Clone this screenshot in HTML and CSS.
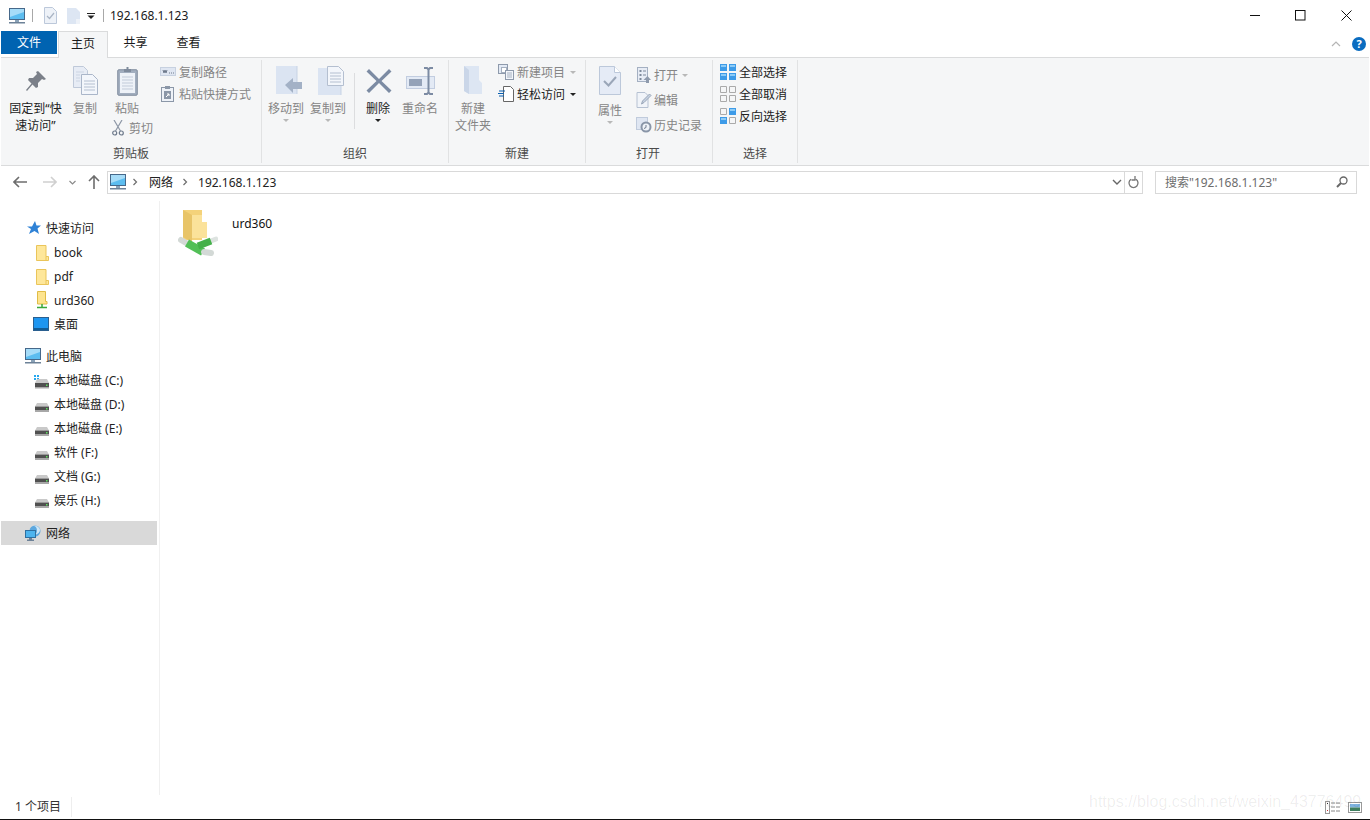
FILE: index.html
```html
<!DOCTYPE html>
<html lang="zh-CN">
<head>
  <meta charset="UTF-8">
  <title>192.168.1.123</title>
  <link rel="stylesheet" href="styles.css">
</head>
<body>
  <svg class="defs" width="0" height="0">
    <symbol id="pc" viewBox="0 0 16 16">
      <rect x="0.5" y="0.5" width="15" height="11" fill="#5cbdf0" stroke="#46688a"/>
      <path d="M1 1h14v3L1 9z" fill="#a6dcf8"/>
      <rect x="6" y="12" width="4" height="2" fill="#8aa2b8"/>
      <rect x="0" y="14" width="16" height="1.5" fill="#6d8298"/>
    </symbol>
    <symbol id="drive" viewBox="0 0 14 9">
      <path d="M2 0h10l2 3.500H0z" fill="#c9c9c9"/>
      <rect x="0" y="3.500" width="14" height="4" fill="#505050"/>
      <rect x="0" y="7.500" width="14" height="1.500" fill="#a8a8a8"/>
      <rect x="11" y="5" width="1.500" height="1.500" fill="#5fe05f"/>
    </symbol>
    <symbol id="folder" viewBox="0 0 13 16" preserveAspectRatio="none">
      <path d="M.5.5h9.500v11h2.500v4H.5z" fill="#fee79a" stroke="#eac55a"/>
      <path d="M10 11.500v4" stroke="#eac55a"/>
    </symbol>
    <symbol id="chev" viewBox="0 0 8 8">
      <path d="M2.500 1l3 3-3 3" fill="none" stroke="#6d6d6d" stroke-width="1.200"/>
    </symbol>
  </svg>

  <div class="window">
    <header class="title-bar">
      <svg class="qa-pc" width="16" height="16"><use href="#pc"/></svg>
      <span class="qa-sep"></span>
      <svg class="qa-check" width="13" height="17" viewBox="0 0 13 17">
        <path d="M.5.5h8l4 4v12H.5z" fill="#eef2f8" stroke="#bcc8da"/>
        <path d="M3 9l2.500 2.500L10 6" fill="none" stroke="#a9b4c4" stroke-width="1.200"/>
      </svg>
      <svg class="qa-blank" width="13" height="16" viewBox="0 0 13 16">
        <path d="M0 0h9l4 4v12H0z" fill="#dde6f3"/>
        <path d="M9 11h4v5H9z" fill="#eef2f8"/>
      </svg>
      <svg class="qa-caret" width="8" height="6" viewBox="0 0 8 6">
        <rect x="0" y="0" width="8" height="1" fill="#222"/>
        <path d="M.5 2.500h7L4 6z" fill="#222"/>
      </svg>
      <span class="qa-sep qa-sep-end"></span>
      <span class="title-text">192.168.1.123</span>
      <div class="win-controls">
        <div class="win-btn"><svg width="11" height="11"><path d="M0 5.500h10" stroke="#111"/></svg></div>
        <div class="win-btn"><svg width="11" height="11"><rect x=".5" y=".5" width="9.500" height="9.500" fill="none" stroke="#111"/></svg></div>
        <div class="win-btn"><svg width="11" height="11"><path d="M.5.5l10 10M10.500.5l-10 10" stroke="#111"/></svg></div>
      </div>
    </header>

    <nav class="tabs">
      <div class="tab tab-file">文件</div>
      <div class="tab tab-active">主页</div>
      <div class="tab">共享</div>
      <div class="tab">查看</div>
      <div class="tabs-right">
        <svg width="10" height="6" viewBox="0 0 10 6"><path d="M1 5l4-4 4 4" fill="none" stroke="#b5b5b5" stroke-width="1.200"/></svg>
        <span class="help">?</span>
      </div>
    </nav>

    <section class="ribbon">
      <div class="group group-clip">
        <div class="group-body">
          <div class="big-btn btn-pin">
            <div class="big-icon">
              <svg width="22" height="22" viewBox="0 0 22 22">
                <path d="M13 1l8 8-2 1-2-1-4 4 0 4-2 1-3.500-3.500L2 21l-1-1 5.500-6.500L3 10l1-2h4l4-4-1-2z" fill="#7b8089"/>
              </svg>
            </div>
            <span class="dark">固定到“快<br>速访问”</span>
          </div>
          <div class="big-btn btn-copy">
            <div class="big-icon">
              <svg width="25" height="29" viewBox="0 0 25 29">
                <path d="M.5.5h10l4 4v17H.5z" fill="#e7ecf5" stroke="#bfc9d9"/>
                <path d="M8.500 8.500h11l5 5v15h-16z" fill="#f3f6fb" stroke="#aab6c9"/>
                <path d="M11 15h11M11 18h11M11 21h11M11 24h11" stroke="#b4bfd0"/>
                <path d="M3 6h8M3 9h4M3 12h4M3 15h4" stroke="#ccd5e3"/>
              </svg>
            </div>
            <span>复制</span>
          </div>
          <div class="paste-col">
            <div class="big-btn">
              <div class="big-icon">
                <svg width="21" height="30" viewBox="0 0 21 30">
                  <rect x=".75" y="3.750" width="19.500" height="25.500" rx="1" fill="#a2aebf" stroke="#7f8b9c"/>
                  <rect x="3" y="7" width="15" height="20" fill="#eef2f8"/>
                  <path d="M5 11h11M5 14h11M5 17h11M5 20h11M5 23h11" stroke="#c2cbd9"/>
                  <path d="M7 6V3h2.500V1h2v2H14v3z" fill="#7f8b9c"/>
                </svg>
              </div>
              <span>粘贴</span>
            </div>
            <div class="small-btn btn-cut">
              <svg width="12" height="16" viewBox="0 0 12 16">
                <path d="M2 0l6.500 11M10 0L3.500 11" stroke="#8d97a6" stroke-width="1.200"/>
                <circle cx="2.700" cy="13" r="2" fill="none" stroke="#6e7a8c" stroke-width="1.200"/>
                <circle cx="9.300" cy="13" r="2" fill="none" stroke="#6e7a8c" stroke-width="1.200"/>
              </svg>
              <span>剪切</span>
            </div>
          </div>
          <div class="small-col col-clip">
            <div class="small-btn">
              <svg width="16" height="10" viewBox="0 0 16 10">
                <rect x=".5" y=".5" width="15" height="8" fill="#dfe6f2" stroke="#c7d1e0"/>
                <path d="M3 3l1 3 1-3 1 3 1-3M9 6h1M11 6h1M13 6h1" fill="none" stroke="#6e7a8c"/>
              </svg>
              <span>复制路径</span>
            </div>
            <div class="small-btn">
              <svg width="14" height="16" viewBox="0 0 14 16">
                <rect x=".5" y="1.500" width="12" height="14" fill="#eef2f8" stroke="#8b97a8"/>
                <rect x="4" y="0" width="5" height="3" fill="#8b97a8"/>
                <rect x="3" y="5" width="7" height="8" fill="#8b97a8"/>
                <path d="M5 11l3-3M6 8h2v2" fill="none" stroke="#fff"/>
              </svg>
              <span>粘贴快捷方式</span>
            </div>
          </div>
        </div>
        <div class="group-label">剪贴板</div>
      </div>

      <div class="group group-org">
        <div class="group-body">
          <div class="big-btn btn-shift">
            <div class="big-icon">
              <svg width="26" height="29" viewBox="0 0 26 29">
                <path d="M0 0h21v28H0z" fill="#dbe4f2"/>
                <path d="M21 0v28" stroke="#c7d3e5"/>
                <path d="M9 19l8-7v4h9v7h-9v4z" fill="#a3b1c6"/>
              </svg>
            </div>
            <span>移动到</span>
            <i class="caret caret-off"></i>
          </div>
          <div class="big-btn btn-shift">
            <div class="big-icon">
              <svg width="26" height="30" viewBox="0 0 26 30">
                <path d="M0 2h23v27H0z" fill="#dbe4f2"/>
                <path d="M23 14v15" stroke="#c7d3e5"/>
                <path d="M9.500.5h11l5 5v14h-16z" fill="#f3f6fb" stroke="#b4bfd0"/>
                <path d="M12 7h11M12 10h11M12 13h11M12 16h11" stroke="#b4bfd0"/>
              </svg>
            </div>
            <span>复制到</span>
            <i class="caret caret-off"></i>
          </div>
          <span class="btn-sep"></span>
          <div class="big-btn btn-delete">
            <div class="big-icon">
              <svg width="26" height="26" viewBox="0 0 26 26">
                <path d="M3 1l10 10L23 1l2.500 2.500-10 9.500 10 9.500L23 25 13 15 3 25 .5 22.500l10-9.500-10-9.500z" fill="#7c8ba3"/>
              </svg>
            </div>
            <span class="dark">删除</span>
            <i class="caret"></i>
          </div>
          <div class="big-btn btn-rename">
            <div class="big-icon">
              <svg width="29" height="28" viewBox="0 0 29 28">
                <rect x=".5" y="9.500" width="28" height="12" fill="#e3eaf5" stroke="#c2cde0"/>
                <rect x="3" y="12" width="13" height="7" fill="#94a2b8"/>
                <path d="M18 1h3l1.500 1.500L24 1h3M22.500 2v24M18 27h3l1.500-1.500L24 27h3" fill="none" stroke="#7c8ba3" stroke-width="2"/>
              </svg>
            </div>
            <span>重命名</span>
          </div>
        </div>
        <div class="group-label">组织</div>
      </div>

      <div class="group group-new">
        <div class="group-body">
          <div class="big-btn">
            <div class="big-icon">
              <svg width="18" height="28" viewBox="0 0 18 28">
                <path d="M0 0h15v14l3 3v11H5l-5-3z" fill="#dde6f3"/>
                <path d="M0 0l5 4v24l-5-3z" fill="#cad6e8"/>
              </svg>
            </div>
            <span>新建<br>文件夹</span>
          </div>
          <div class="small-col col-new">
            <div class="small-btn">
              <svg width="16" height="16" viewBox="0 0 16 16">
                <rect x=".5" y=".5" width="9" height="9" fill="#e3eaf5" stroke="#8e9aac"/>
                <rect x="3.500" y="3.500" width="5" height="5" fill="#fff" stroke="#a5b0c0"/>
                <rect x="7.500" y="6.500" width="8" height="9" fill="#f3f6fb" stroke="#8e9aac"/>
                <path d="M9 9h5M9 11h5M9 13h5" stroke="#a5b0c0"/>
              </svg>
              <span>新建项目</span>
              <i class="caret caret-off caret-inline"></i>
            </div>
            <div class="small-btn">
              <svg width="16" height="16" viewBox="0 0 16 16">
                <path d="M5.500.5h7l3 3v12h-10z" fill="#fff" stroke="#666"/>
                <path d="M1 5h6M0 7.500h6M1 10h5" stroke="#0a5fb0" stroke-width="1.200"/>
              </svg>
              <span class="dark">轻松访问</span>
              <i class="caret caret-inline"></i>
            </div>
          </div>
        </div>
        <div class="group-label">新建</div>
      </div>

      <div class="group group-open">
        <div class="group-body">
          <div class="big-btn btn-props">
            <div class="big-icon">
              <svg width="22" height="29" viewBox="0 0 22 29">
                <path d="M.5.5h15l6 6v22H.5z" fill="#e5ebf6" stroke="#bcc8da"/>
                <path d="M15.500.5v6h6" fill="#fff" stroke="#bcc8da"/>
                <path d="M5 15l4.500 4.500L17 11" fill="none" stroke="#9aa6b8" stroke-width="2"/>
              </svg>
            </div>
            <span>属性</span>
            <i class="caret caret-off"></i>
          </div>
          <div class="small-col col-open">
            <div class="small-btn">
              <svg width="14" height="16" viewBox="0 0 14 16">
                <rect x=".5" y=".5" width="10" height="14" fill="#e7ecf5" stroke="#a4b0c2"/>
                <path d="M2.500 3h2v2h-2zM2.500 7h2v2h-2zM2.500 11h2v2h-2z" fill="#7e8a9c"/>
                <path d="M6 4h3M6 8h3" stroke="#7e8a9c"/>
                <path d="M6.500 13l4-4 3.500 4h-2v3h-3v-3z" fill="#8e9aac"/>
              </svg>
              <span>打开</span>
              <i class="caret caret-off caret-inline"></i>
            </div>
            <div class="small-btn">
              <svg width="15" height="16" viewBox="0 0 15 16">
                <path d="M.5.5h8l3 3v12H.5z" fill="#f1f4f9" stroke="#b6c1d2"/>
                <path d="M5 12l1-3 7-7 1.500 1.500-7 7z" fill="#c7d2e2" stroke="#9aa6b8"/>
              </svg>
              <span>编辑</span>
            </div>
            <div class="small-btn">
              <svg width="16" height="16" viewBox="0 0 16 16">
                <rect x=".5" y=".5" width="11" height="12" fill="#dfe6f2" stroke="#c0cbdc"/>
                <circle cx="10" cy="10" r="5.500" fill="#8995a7"/>
                <circle cx="10" cy="10" r="3.500" fill="#eef2f8"/>
                <path d="M10 8v2.500l-2 1" fill="none" stroke="#6e7a8c"/>
              </svg>
              <span>历史记录</span>
            </div>
          </div>
        </div>
        <div class="group-label">打开</div>
      </div>

      <div class="group group-select">
        <div class="group-body">
          <div class="small-col col-select">
            <div class="small-btn">
              <svg width="16" height="16" viewBox="0 0 16 16">
                <path d="M0 0h7v7H0zM9 0h7v7H9zM0 9h7v7H0zM9 9h7v7H9z" fill="#3d9be8"/>
                <path d="M1 1h5v2H1zM10 1h5v2h-5zM1 10h5v2H1zM10 10h5v2h-5z" fill="#8ccbf7"/>
              </svg>
              <span class="dark">全部选择</span>
            </div>
            <div class="small-btn">
              <svg width="16" height="16" viewBox="0 0 16 16">
                <path d="M.5.5h6v6h-6zM9.500.5h6v6h-6zM.5 9.500h6v6h-6zM9.500 9.500h6v6h-6z" fill="none" stroke="#aaa"/>
              </svg>
              <span class="dark">全部取消</span>
            </div>
            <div class="small-btn">
              <svg width="16" height="16" viewBox="0 0 16 16">
                <path d="M.5.5h6v6h-6zM9.500 9.500h6v6h-6z" fill="none" stroke="#aaa"/>
                <path d="M9 0h7v7H9zM0 9h7v7H0z" fill="#3d9be8"/>
                <path d="M10 1h5v2h-5zM1 10h5v2H1z" fill="#8ccbf7"/>
              </svg>
              <span class="dark">反向选择</span>
            </div>
          </div>
        </div>
        <div class="group-label">选择</div>
      </div>
    </section>

    <section class="address-row">
      <div class="nav-btns">
        <svg class="nav-back" width="14" height="12" viewBox="0 0 14 12"><path d="M6 1L1 6l5 5M1 6h13" fill="none" stroke="#6d6d6d" stroke-width="1.600"/></svg>
        <svg class="nav-fwd" width="14" height="12" viewBox="0 0 14 12"><path d="M8 1l5 5-5 5M13 6H0" fill="none" stroke="#d0d0d0" stroke-width="1.600"/></svg>
        <svg class="nav-drop" width="7" height="5" viewBox="0 0 7 5"><path d="M.5 1l3 3 3-3" fill="none" stroke="#8a8a8a" stroke-width="1.200"/></svg>
        <svg class="nav-up" width="12" height="14" viewBox="0 0 12 14"><path d="M1 6l5-5 5 5M6 1v13" fill="none" stroke="#6d6d6d" stroke-width="1.600"/></svg>
      </div>
      <div class="address-box">
        <svg class="addr-pc" width="16" height="16"><use href="#pc"/></svg>
        <svg class="addr-chev" width="8" height="8"><use href="#chev"/></svg>
        <span>网络</span>
        <svg class="addr-chev addr-chev-2" width="8" height="8"><use href="#chev"/></svg>
        <span>192.168.1.123</span>
        <div class="addr-tools">
          <svg width="10" height="6" viewBox="0 0 10 6"><path d="M1 1l4 4 4-4" fill="none" stroke="#666" stroke-width="1.400"/></svg>
          <span class="addr-refresh">
            <svg width="11" height="13" viewBox="0 0 11 13"><path d="M3 3.300A4.500 4.500 0 1 0 8 3.300M7 0v4h-3.500" fill="none" stroke="#777" stroke-width="1.300"/></svg>
          </span>
        </div>
      </div>
      <div class="search-box">
        <span>搜索"192.168.1.123"</span>
        <svg width="12" height="12" viewBox="0 0 12 12"><circle cx="7.500" cy="4.500" r="3.500" fill="none" stroke="#666" stroke-width="1.300"/><path d="M5 7l-4 4" stroke="#666" stroke-width="2"/></svg>
      </div>
    </section>

    <main class="main">
      <aside class="sidebar">
        <div class="nav-item nav-top">
          <svg width="14" height="14" viewBox="0 0 14 14"><path d="M8 0l1.500 4.500H14l-3.500 3L12 13 7.500 10 2 13l2-5L0 5.500h5z" fill="#2f82d6"/></svg>
          <span>快速访问</span>
        </div>
        <div class="nav-item nav-sub"><svg class="ico-folder" width="13" height="16"><use href="#folder"/></svg><span>book</span></div>
        <div class="nav-item nav-sub"><svg class="ico-folder" width="13" height="16"><use href="#folder"/></svg><span>pdf</span></div>
        <div class="nav-item nav-sub">
          <svg width="14" height="18" viewBox="0 0 14 18">
            <path d="M2.500.5h8v10h1.500v2.500H2.500z" fill="#fde48f" stroke="#e0bc46"/>
            <path d="M7 13v3M2 16.500h10" stroke="#3aa83a" stroke-width="1.500"/>
          </svg>
          <span>urd360</span>
        </div>
        <div class="nav-item nav-sub">
          <svg class="ico-wide" width="16" height="14" viewBox="0 0 16 14">
            <rect x=".5" y=".5" width="15" height="13" fill="#1e96f0" stroke="#2a5f8f"/>
            <path d="M1 11h14v2H1z" fill="#135c94"/>
          </svg>
          <span>桌面</span>
        </div>

        <div class="nav-item nav-top nav-group">
          <svg class="ico-pc" width="16" height="16"><use href="#pc"/></svg>
          <span>此电脑</span>
        </div>
        <div class="nav-item nav-sub">
          <svg class="ico-drive-c" width="16" height="14" viewBox="0 0 16 14">
            <path d="M0 0h2v2H0zM3 0h2v2H3zM0 3h2v2H0zM3 3h2v2H3z" fill="#25a8f0"/>
            <path d="M3 4h10l2 4H1z" fill="#c9c9c9"/>
            <rect x="1" y="8" width="14" height="4" fill="#505050"/>
            <rect x="1" y="12" width="14" height="1.500" fill="#a8a8a8"/>
            <rect x="12" y="9.500" width="1.500" height="1.500" fill="#5fe05f"/>
          </svg>
          <span>本地磁盘 (C:)</span>
        </div>
        <div class="nav-item nav-sub"><svg class="ico-drive" width="14" height="9"><use href="#drive"/></svg><span>本地磁盘 (D:)</span></div>
        <div class="nav-item nav-sub"><svg class="ico-drive" width="14" height="9"><use href="#drive"/></svg><span>本地磁盘 (E:)</span></div>
        <div class="nav-item nav-sub"><svg class="ico-drive" width="14" height="9"><use href="#drive"/></svg><span>软件 (F:)</span></div>
        <div class="nav-item nav-sub"><svg class="ico-drive" width="14" height="9"><use href="#drive"/></svg><span>文档 (G:)</span></div>
        <div class="nav-item nav-sub"><svg class="ico-drive" width="14" height="9"><use href="#drive"/></svg><span>娱乐 (H:)</span></div>

        <div class="nav-item nav-top nav-selected">
          <svg class="ico-pc" width="16" height="16" viewBox="0 0 16 16">
            <circle cx="10" cy="6" r="5.500" fill="#5da8df"/>
            <path d="M8 1c3 0 4 2 4 5 0 1-1 3-2 4 3-1 5-3 5-5S12 0 8 1z" fill="#cfe6f6"/>
            <rect x=".5" y="5.500" width="10" height="7" fill="#4db4ee" stroke="#2f6f9f"/>
            <path d="M4 13h3v1.500h2V16H2v-1.500h2z" fill="#6d8298"/>
          </svg>
          <span>网络</span>
        </div>
      </aside>

      <div class="files">
        <div class="file-item">
          <svg width="40" height="48" viewBox="0 0 40 48">
            <path d="M5 2h19v30H5z" fill="#f4d27a"/>
            <path d="M5 2l9 5v27l-9-5z" fill="#e8c468"/>
            <path d="M14 7h10v7h5v16H14z" fill="#fbe29a"/>
            <path d="M3 32l6 3.500" stroke="#d3d9d6" stroke-width="6" stroke-linecap="round"/>
            <path d="M33 33l5-2" stroke="#dde3e0" stroke-width="5" stroke-linecap="round"/>
            <path d="M9 35l16 9" stroke="#52bf57" stroke-width="8"/>
            <path d="M20 38l13-5" stroke="#45b04a" stroke-width="7"/>
            <path d="M26 44l7 1" stroke="#d3d9d6" stroke-width="6" stroke-linecap="round"/>
          </svg>
          <span class="file-name">urd360</span>
        </div>
      </div>
    </main>

    <footer class="status-bar">
      <span class="status-count">1 个项目</span>
      <div class="view-btns">
        <svg width="16" height="13" viewBox="0 0 16 13">
          <rect x=".5" y=".5" width="4" height="12" fill="#fff" stroke="#999"/>
          <path d="M2 2.500h1" stroke="#333"/><path d="M2 9.500h1" stroke="#c33"/>
          <path d="M6 2h4M11 2h4M6 6h4M11 6h4M6 10h4M11 10h4" stroke="#888"/>
        </svg>
        <svg width="14" height="11" viewBox="0 0 14 11">
          <rect x=".5" y=".5" width="13" height="10" fill="#fff" stroke="#999"/>
          <rect x="2" y="2" width="10" height="3.500" fill="#7fb4e0"/>
          <rect x="2" y="5.500" width="10" height="3.500" fill="#3f7f5f"/>
        </svg>
      </div>
    </footer>

    <div class="watermark">https://blog.csdn.net/weixin_43776499</div>
  </div>
</body>
</html>
```

FILE: styles.css
```css
/* 基础 */
* {
  box-sizing: border-box;
}
html, body {
  margin: 0;
  height: 100%;
  background: #fff;
}
body {
  font-family: "Noto Sans", "Noto Sans CJK SC", sans-serif;
  font-size: 12px;
  color: #1a1a1a;
  overflow: hidden;
}
.defs {
  position: absolute;
}
svg {
  display: block;
  flex: none;
}
.window {
  position: relative;
  width: 1370px;
  height: 820px;
  display: flex;
  flex-direction: column;
  border-bottom: 1px solid #111;
}

/* 标题栏 */
.title-bar {
  height: 31px;
  display: flex;
  align-items: center;
  padding-left: 9px;
  flex: none;
}
.qa-sep {
  width: 1px;
  height: 13px;
  background: #a8a8a8;
  margin-left: 7px;
}
.qa-check {
  margin-left: 11px;
}
.qa-blank {
  margin-left: 10px;
}
.qa-caret {
  margin-left: 7px;
}
.qa-sep-end {
  margin-left: 8px;
}
.title-text {
  margin-left: 6px;
}
.win-controls {
  margin-left: auto;
  display: flex;
  padding-right: 1px;
}
.win-btn {
  width: 45.5px;
  height: 31px;
  display: flex;
  align-items: center;
  justify-content: center;
}

/* 选项卡 */
.tabs {
  height: 26px;
  flex: none;
  display: flex;
  padding-left: 1px;
}
.tab {
  width: 53px;
  height: 23px;
  line-height: 24px;
  text-align: center;
}
.tab-file {
  width: 56px;
  background: #0063b1;
  color: #fff;
  margin-right: 1px;
}
.tab-active {
  width: 50px;
  height: 27px;
  background: #f5f6f7;
  border: 1px solid #dadbdc;
  border-bottom: 0;
  position: relative;
  z-index: 1;
  line-height: 23px;
  margin-right: 1px;
}
.tabs-right {
  margin-left: auto;
  display: flex;
  align-items: center;
  gap: 11px;
  padding-right: 4px;
  height: 26px;
}
.help {
  width: 14px;
  height: 14px;
  border-radius: 50%;
  background: #0a6cc0;
  color: #fff;
  font-size: 11px;
  font-weight: 700;
  line-height: 14px;
  text-align: center;
}

/* 功能区 */
.ribbon {
  height: 109px;
  flex: none;
  display: flex;
  align-items: flex-start;
  margin: 0 1px;
  padding-top: 2px;
  background: #f5f6f7;
  border-top: 1px solid #dadbdc;
  border-bottom: 1px solid #dadbdc;
  color: #858585;
}
.group {
  height: 103px;
  display: flex;
  flex-direction: column;
  border-right: 1px solid #e1e2e3;
}
.group-clip { width: 261px; }
.group-org { width: 187px; }
.group-new { width: 137px; }
.group-open { width: 127px; }
.group-select { width: 85px; }
.group-body {
  flex: 1;
  display: flex;
  align-items: flex-start;
}
.group-clip .group-body { padding-left: 6px; }
.group-org .group-body { padding-left: 3px; }
.group-new .group-body { padding-left: 3px; }
.group-open .group-body { padding-left: 3px; }
.group-select .group-body { padding-left: 7px; }
.group-label {
  height: 20px;
  line-height: 22px;
  text-align: center;
  color: #4a4a4a;
}
.group-open .group-label {
  padding-right: 2px;
}
.dark {
  color: #222;
}
.big-btn {
  width: 42px;
  flex: none;
  display: flex;
  flex-direction: column;
  align-items: center;
  text-align: center;
  padding-top: 6px;
  line-height: 17px;
  white-space: nowrap;
}
.big-icon {
  height: 34px;
  display: flex;
  align-items: flex-start;
  justify-content: center;
}
.btn-pin {
  width: 57px;
}
.btn-pin .big-icon svg {
  margin-top: 4px;
}
.btn-shift .big-icon svg {
  margin-left: 6px;
}
.btn-delete .big-icon svg {
  margin: 2px 0 0 1px;
}
.btn-rename .big-icon svg {
  margin: 1px 0 0 1px;
}
.btn-props .big-icon {
  height: 36px;
}
.caret {
  width: 0;
  height: 0;
  margin-top: 2px;
  border-left: 3px solid transparent;
  border-right: 3px solid transparent;
  border-top: 3px solid #222;
}
.caret-off {
  border-top-color: #b8b8b8;
}
.caret-inline {
  margin: 1px 0 0 2px;
}
.btn-sep {
  width: 1px;
  height: 56px;
  margin: 13px 2px 0 5px;
  background: #dcdddf;
  flex: none;
}
.paste-col {
  width: 42px;
  flex: none;
}
.btn-cut {
  margin-left: 4px;
  width: 48px;
  height: 18px;
  gap: 5px;
}
.small-col {
  display: flex;
  flex-direction: column;
  padding-top: 1px;
}
.col-clip {
  margin-left: 12px;
}
.col-new {
  margin-left: 4px;
}
.col-open {
  margin-left: 5px;
  padding-top: 2px;
}
.col-open .small-btn {
  height: 25px;
  gap: 2px;
}
.small-btn {
  height: 22px;
  display: flex;
  align-items: center;
  gap: 3px;
  white-space: nowrap;
}
.small-btn > svg {
  width: 16px;
}

/* 地址栏 */
.address-row {
  height: 30px;
  flex: none;
  display: flex;
  align-items: center;
  padding-top: 2px;
  color: #222;
}
.nav-btns {
  display: flex;
  align-items: center;
  padding-left: 13px;
  width: 107px;
}
.nav-fwd { margin-left: 16px; }
.nav-drop { margin-left: 12px; }
.nav-up { margin-left: 12px; }
.address-box {
  width: 1036px;
  height: 23px;
  border: 1px solid #d9d9d9;
  display: flex;
  align-items: center;
  padding-left: 2px;
}
.addr-chev {
  margin: 0 10px 0 5px;
}
.addr-chev-2 {
  margin: 0 9px 0 8px;
}
.addr-tools {
  margin-left: auto;
  display: flex;
  align-items: center;
  height: 100%;
}
.addr-refresh {
  width: 18px;
  height: 100%;
  margin-left: 2px;
  padding-left: 3px;
  border-left: 1px solid #d9d9d9;
  display: flex;
  align-items: center;
}
.search-box {
  width: 202px;
  height: 23px;
  margin-left: 12px;
  border: 1px solid #d9d9d9;
  display: flex;
  align-items: center;
  justify-content: space-between;
  padding: 0 8px 0 9px;
  color: #6d6d6d;
}

/* 主体 */
.main {
  flex: 1;
  display: flex;
  min-height: 0;
}
.sidebar {
  width: 160px;
  flex: none;
  margin-top: 5px;
  padding-top: 15px;
  border-right: 1px solid #f0f0f0;
}
.nav-item {
  height: 24px;
  display: flex;
  align-items: center;
  width: 156px;
  margin-left: 1px;
  color: #222;
}
.nav-top {
  padding-left: 26px;
  gap: 5px;
}
.nav-top .ico-pc {
  margin-left: -2px;
}
.nav-sub {
  padding-left: 33px;
  gap: 5px;
}
.nav-sub > svg {
  margin-left: 1px;
}
.nav-sub .ico-folder {
  margin: 1px 0 0 2px;
}
.nav-sub .ico-wide {
  margin-left: -1px;
}
.nav-sub .ico-drive {
  margin: 7px 0 0 1px;
}
.nav-sub .ico-drive-c {
  margin: 4px -1px 0 0;
}
.nav-group {
  margin-top: 8px;
}
.nav-selected {
  margin-top: 9px;
  background: #d9d9d9;
}
.files {
  flex: 1;
  padding: 12px 0 0 18px;
}
.file-item {
  display: flex;
  align-items: flex-start;
  gap: 14px;
}
.file-name {
  margin-top: 7px;
  color: #111;
}

/* 状态栏 */
.status-bar {
  height: 24px;
  flex: none;
  display: flex;
  align-items: center;
  padding: 0 8px 0 15px;
  color: #333;
}
.status-count {
  padding-right: 10px;
  padding-bottom: 2px;
  border-right: 1px solid #eee;
}
.view-btns {
  margin-left: auto;
  display: flex;
  align-items: center;
  gap: 7px;
}
.watermark {
  position: absolute;
  left: 1089px;
  top: 793px;
  font-family: "Liberation Sans", sans-serif;
  font-size: 16px;
  color: rgba(0, 0, 0, 0.07);
  white-space: nowrap;
}
```
